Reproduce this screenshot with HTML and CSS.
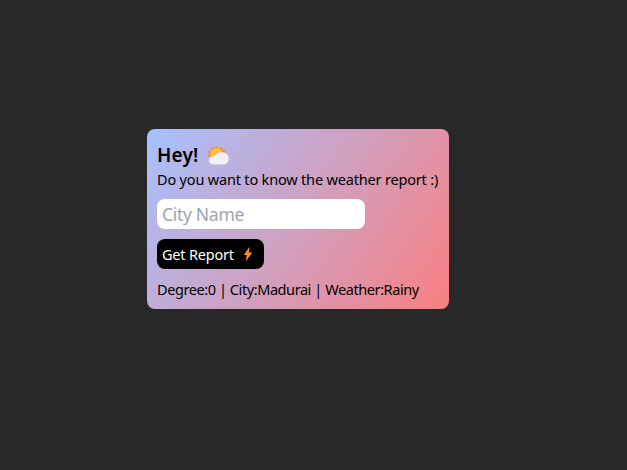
FILE: index.html
```
<!DOCTYPE html>
<html lang="en">
<head>
<meta charset="utf-8">
<title>Weather Report</title>
<link rel="stylesheet" href="styles.css">
</head>
<body>
<main class="card">
  <h1 class="title"><span>Hey!</span>
    <svg class="cloud" viewBox="0 0 22 20" aria-hidden="true">
      <path class="rays" d="M9 0l2 2 3-1 1 3 3 1-1 3 1 3H2L0 10l1-3-1-2 3-1 1-3 3 1z"/>
      <circle class="sun" cx="8.5" cy="8" r="6.3"/>
      <path class="puff" d="M5.500 18.600C-.8 18.600-.5 10.500 5 10.500C7.500 10 8 6.300 13.500 6.300C18 6.300 20.700 9 20.700 12.400C20.700 16 18.500 18.600 15 18.600Z"/>
    </svg>
  </h1>
  <p class="question">Do you want to know the weather report :)</p>
  <input class="city" type="text" placeholder="City Name">
  <button class="report" type="button"><span>Get Report</span>
    <svg class="bolt" viewBox="0 0 10 16" aria-hidden="true"><path d="M6.500 .8L.8 9h2.900L2.800 15.500 9.300 6.500H6z"/></svg>
  </button>
  <p class="result">Degree:0 | City:Madurai | Weather:Rainy</p>
</main>
</body>
</html>
```
FILE: styles.css
```
* { box-sizing: border-box; margin: 0; }
body {
  height: 470px;
  padding: 129px 0 0 147px;
  overflow: hidden;
  background: #282828;
  color: #000;
  font: 14.5px/24px "Noto Sans", "Open Sans", sans-serif;
}
.card {
  display: flex;
  flex-direction: column;
  align-items: flex-start;
  width: 302px;
  height: 180px;
  padding: 13px 10px 0;
  border-radius: 8px;
  background: linear-gradient(125deg, #a6c1ff, #f97f80);
}
.title {
  display: flex;
  align-items: center;
  gap: 9px;
  height: 25px;
  font-size: 19px;
  font-weight: 600;
  letter-spacing: 0.2px;
}
.cloud { width: 22px; height: 20px; margin-top: 2px; }
.rays { fill: #f7894a; }
.sun { fill: #fcc035; }
.puff { fill: #f3eef8; stroke: #d9d0df; stroke-width: 0.6; }
.question, .result { white-space: nowrap; letter-spacing: -0.18px; }
.city {
  width: 208px;
  height: 30px;
  margin-top: 8px;
  padding: 0 5px;
  border: 0;
  border-radius: 8px;
  background: #fff;
  font: 17.5px/30px "Noto Sans", "Open Sans", sans-serif;
  letter-spacing: -0.3px;
}
.city::placeholder { color: #9ca3af; opacity: 1; }
.report {
  display: flex;
  align-items: center;
  justify-content: space-between;
  width: 107px;
  height: 30px;
  margin-top: 10px;
  padding: 0 11px 0 5px;
  border: 0;
  border-radius: 8px;
  background: #000;
  color: #fff;
  font: inherit;
  letter-spacing: -0.2px;
}
.bolt { width: 10px; height: 16px; fill: #ff8b2c; }
.result { margin-top: 8px; letter-spacing: -0.42px; }
```
